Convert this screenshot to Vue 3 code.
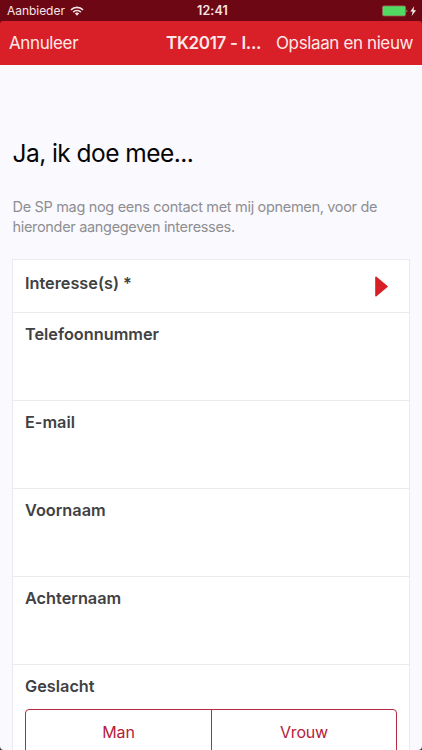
<script setup>
const fields = ['Telefoonnummer', 'E-mail', 'Voornaam', 'Achternaam']
</script>

<template>
  <div class="screen">
    <div class="status">
      <div class="carrier">
        <span class="carrier-name">Aanbieder</span>
        <svg class="wifi" width="14" height="10" viewBox="0 0 14 10">
          <g fill="none" stroke="#f6e4e6" stroke-width="1.6">
            <path d="M1 3.9a8.4 8.4 0 0 1 12 0" />
            <path d="M3.2 6.1a5.3 5.3 0 0 1 7.6 0" />
          </g>
          <path fill="#f6e4e6" d="M7 9.8 4.9 7.6a3 3 0 0 1 4.2 0z" />
        </svg>
      </div>
      <span class="clock">12:41</span>
      <div class="power">
        <svg width="36" height="12" viewBox="0 0 36 12">
          <rect x="0.5" y="0.9" width="23" height="10" rx="1.4" fill="#50da62" stroke="#a0685f" stroke-width="0.8" />
          <path d="M24.6 4.2q1.5 1.8 0 3.6z" fill="#c9d9bd" />
          <path d="M32.1 1.2 28.4 6.6h2.3L29.6 11 34.1 5.2h-2.6z" fill="#fbeff0" />
        </svg>
      </div>
    </div>

    <header class="bar">
      <span class="cancel">Annuleer</span>
      <span class="title">TK2017 - I...</span>
      <span class="save">Opslaan en nieuw</span>
    </header>

    <main class="content">
      <h1>Ja, ik doe mee...</h1>
      <p class="intro">
        <span class="line">De SP mag nog eens contact met mij opnemen, voor de</span>
        <span class="line">hieronder aangegeven interesses.</span>
      </p>

      <section class="card">
        <div class="row picker">
          <span class="label">Interesse(s) *</span>
          <svg class="arrow" width="13" height="21" viewBox="0 0 13 21">
            <path d="M1 1.3 12 10.5 1 19.7z" fill="#d81e26" stroke="#d81e26" stroke-width="1.6" stroke-linejoin="round" />
          </svg>
        </div>
        <div v-for="field in fields" :key="field" class="row">
          <span class="label">{{ field }}</span>
        </div>
        <div class="row gender">
          <span class="label">Geslacht</span>
          <div class="segments">
            <span class="segment">Man</span>
            <span class="segment">Vrouw</span>
          </div>
        </div>
      </section>
    </main>
    <svg class="corner left" width="4" height="4" viewBox="0 0 4 4"><path d="M0 0Q0 4 4 4H0z" fill="#333" /></svg>
    <svg class="corner right" width="4" height="4" viewBox="0 0 4 4"><path d="M4 0Q4 4 0 4H4z" fill="#333" /></svg>
  </div>
</template>

<style>
body {
  margin: 0;
  overflow: hidden;
}
</style>

<style scoped>
.screen {
  position: relative;
  width: 422px;
  height: 750px;
  overflow: hidden;
  background: #faf9fe;
  font-family: Inter, "Liberation Sans", sans-serif;
  white-space: nowrap;
}
.status {
  display: grid;
  grid-template-columns: 1fr auto 1fr;
  height: 21px;
  padding: 0 4px 0 7px;
  background: #6c0713;
  color: #f6e4e6;
  line-height: 21px;
}
.carrier {
  display: flex;
  align-items: center;
  gap: 5px;
}
.carrier-name {
  font-size: 12px;
  letter-spacing: -0.04px;
  line-height: 22px;
}
.clock {
  font-size: 12.5px;
  font-weight: 600;
  letter-spacing: 0.15px;
  line-height: 22px;
}
.power {
  display: flex;
  justify-content: flex-end;
  align-items: center;
}
.bar {
  display: flex;
  align-items: center;
  height: 44px;
  box-sizing: border-box;
  padding: 0 9px;
  background: #d91f27;
  border-radius: 3px 3px 0 0;
  color: #fde9ea;
  font-size: 17px;
  line-height: 22px;
  letter-spacing: -0.38px;
  box-shadow: 0 -3px 0 #6c0713;
}
.bar span {
  flex: none;
}
.cancel {
  width: 157px;
}
.title {
  width: 110px;
  font-weight: 600;
  letter-spacing: -0.33px;
}
.content {
  padding: 0 12px;
}
h1 {
  margin: 0;
  padding: 71px 0 0 0.5px;
  font-size: 24.5px;
  font-weight: 400;
  letter-spacing: -0.55px;
  line-height: 34px;
  color: #050505;
}
.intro {
  margin: 0;
  padding: 27px 0 22px 0.5px;
  color: #8e8e92;
  font-size: 14.5px;
  letter-spacing: -0.32px;
  line-height: 20px;
}
.line {
  display: block;
}
.card {
  border: 1px solid #ebebef;
  background: #fff;
}
.row {
  box-sizing: border-box;
  height: 88px;
  padding: 10px 12px 0;
  border-bottom: 1px solid #ebebef;
}
.row.picker {
  display: flex;
  justify-content: space-between;
  height: 53px;
  padding-top: 12px;
  padding-right: 21px;
}
.arrow {
  margin-top: 4px;
}
.label {
  display: block;
  color: #414143;
  font-size: 16.3px;
  font-weight: 600;
  line-height: 23px;
}
.row.gender {
  height: 110px;
}
.segments {
  display: grid;
  grid-template-columns: 1fr 1fr;
  height: 46px;
  box-sizing: border-box;
  margin-top: 11px;
  border: 1px solid #b52c42;
  border-radius: 4px;
}
.segment {
  color: #b5203a;
  font-size: 16px;
  letter-spacing: -0.2px;
  line-height: 45px;
  text-align: center;
}
.segment + .segment {
  border-left: 1px solid #b52c42;
}
.corner {
  position: absolute;
  bottom: 0;
}
.left {
  left: 0;
}
.right {
  right: 0;
}
</style>
